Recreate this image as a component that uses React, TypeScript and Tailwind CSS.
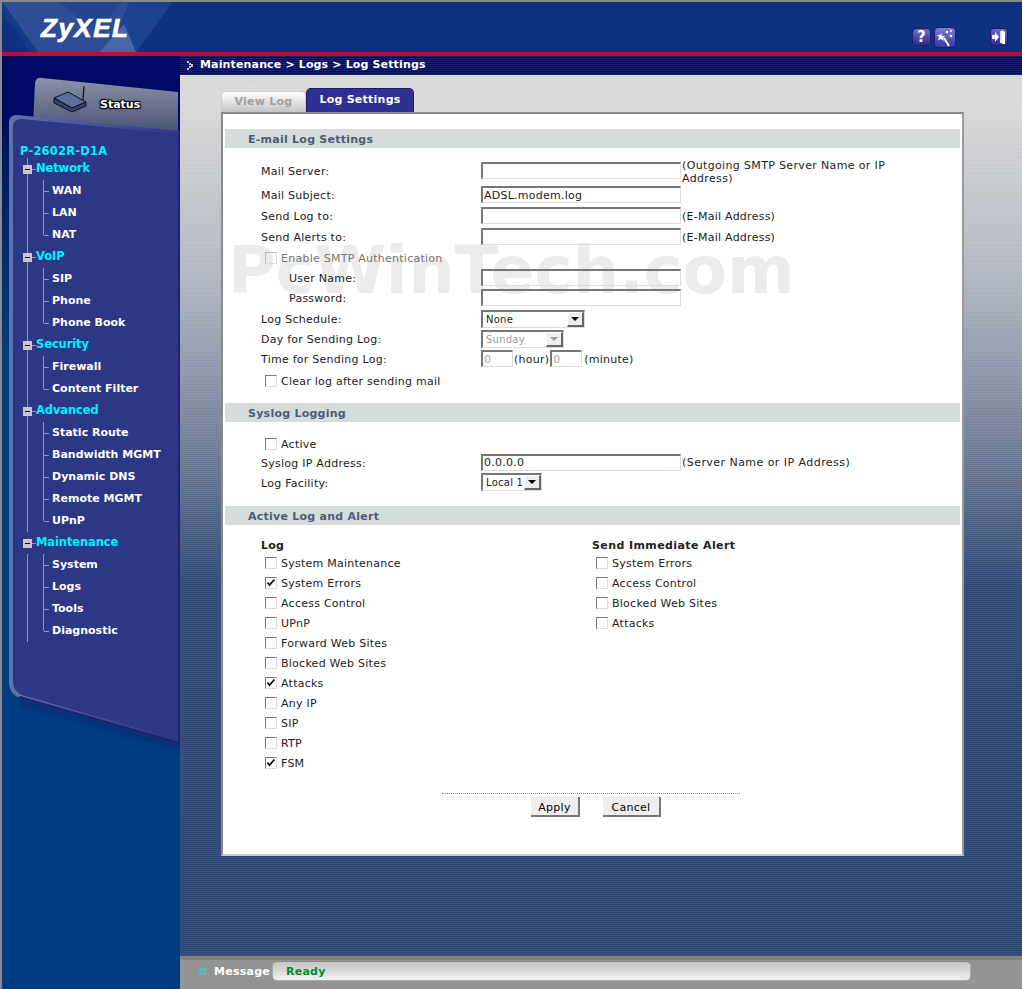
import type { ReactNode } from 'react';

const menu = [
    { title: 'Network', items: ['WAN', 'LAN', 'NAT'] },
    { title: 'VoIP', items: ['SIP', 'Phone', 'Phone Book'] },
    { title: 'Security', items: ['Firewall', 'Content Filter'] },
    { title: 'Advanced', items: ['Static Route', 'Bandwidth MGMT', 'Dynamic DNS', 'Remote MGMT', 'UPnP'] },
    { title: 'Maintenance', items: ['System', 'Logs', 'Tools', 'Diagnostic'] },
];

const logItems: [string, boolean][] = [
    ['System Maintenance', false],
    ['System Errors', true],
    ['Access Control', false],
    ['UPnP', false],
    ['Forward Web Sites', false],
    ['Blocked Web Sites', false],
    ['Attacks', true],
    ['Any IP', false],
    ['SIP', false],
    ['RTP', false],
    ['FSM', true],
];

const alertItems = ['System Errors', 'Access Control', 'Blocked Web Sites', 'Attacks'];

function Check({ label, checked = false, disabled = false }: { label: string; checked?: boolean; disabled?: boolean }) {
    return (
        <div className={`flex h-[20px] items-center ${disabled ? 'text-[#777]' : 'text-[#222]'}`}>
            <span className={`mb-[3px] ml-[4px] flex h-[12px] w-[12px] items-center justify-center border border-r-[#ddd] border-b-[#ddd] ${disabled ? 'border-t-[#bbb] border-l-[#bbb]' : 'border-t-[#777] border-l-[#777]'}`}>
                {checked && (
                    <svg viewBox="0 0 10 10" className="h-[10px] w-[10px]">
                        <path d="M1.5 4.5l2 2.5L8.5 1.5" fill="none" stroke="#111" strokeWidth="1.8" />
                    </svg>
                )}
            </span>
            <span className="ml-[4px] pt-[1px]">{label}</span>
        </div>
    );
}

function TextBox({ value = '', w = 'w-[200px]', disabled = false }: { value?: string; w?: string; disabled?: boolean }) {
    return (
        <div className={`flex h-[17px] ${w} shrink-0 items-center border border-t-2 border-l-2 border-t-[#777] border-l-[#777] border-r-[#ddd] border-b-[#ddd] pl-[1px] text-[11px] leading-none ${disabled ? 'text-[#aaa]' : 'text-[#222]'}`}>
            {value}
        </div>
    );
}

function SelectBox({ value, w, disabled = false }: { value: string; w: string; disabled?: boolean }) {
    return (
        <div className={`flex h-[18px] ${w} items-center justify-between border border-t-2 border-l-2 border-t-[#777] border-l-[#777] border-r-[#ddd] border-b-[#ddd] bg-white pl-[3px] text-[10px] ${disabled ? 'text-[#999]' : 'text-[#222]'}`}>
            <span>{value}</span>
            <span className="flex h-[15px] w-[17px] items-center justify-center border border-r-2 border-b-2 border-t-white border-l-white border-r-[#666] border-b-[#666] bg-[#eee]">
                <span className={`h-0 w-0 border-x-[4px] border-t-[4px] border-x-transparent ${disabled ? 'border-t-[#999]' : 'border-t-black'}`} />
            </span>
        </div>
    );
}

function Section({ title }: { title: string }) {
    return (
        <div className="ml-[2px] flex h-[19px] w-[735px] items-center bg-[#d5dddc] pl-[23px] pt-[4px] text-[11px] font-bold text-[#505a78]">
            {title}
        </div>
    );
}

function Row({ label, indent = 'pl-[38px]', h = 'h-[21px]', children }: { label: string; indent?: string; h?: string; children?: ReactNode }) {
    return (
        <div className={`flex ${h} items-center`}>
            <span className={`w-[258px] shrink-0 pt-[4px] text-[#222] ${indent}`}>{label}</span>
            {children}
        </div>
    );
}

export default function App() {
    return (
        <div className="flex h-[989px] w-[1022px] flex-col overflow-hidden border-l-2 border-t-2 border-[#8a8a8a] font-['DejaVu_Sans',sans-serif] text-[11px] tracking-[0.25px]">
            {/* top banner */}
            <header className="relative flex h-[50px] shrink-0 items-center justify-end overflow-hidden bg-[#0f3180] pt-[20px]">
                <svg className="absolute left-0 top-0 h-[50px] w-[180px]" viewBox="0 0 180 50">
                    <path d="M0 0H170L134 50H36Z" fill="#2f4d95" />
                    <path d="M0 0V10L28 50H36Z" fill="#143a85" />
                    <path d="M127 0H170L134 50H108Z" fill="#1a4290" />
                    <path d="M98 50L122 22L134 50Z" fill="#4a66a6" />
                    <path d="M58 0H120L94 30Z" fill="#254490" />
                </svg>
                <span className="absolute left-[39px] top-[13px] font-['Liberation_Sans',sans-serif] text-[26px] font-bold italic leading-none tracking-[1.5px] text-white [-webkit-text-stroke:0.7px_white]">ZyXEL</span>
                <div className="relative mr-[14px] flex items-center">
                    <span className="flex h-[18px] w-[19px] items-center justify-center rounded-[4px] border border-[#1d1a6e] bg-gradient-to-b from-[#6d6cc6] to-[#2c2a92] text-[15px] font-bold leading-none text-white">?</span>
                    <span className="ml-[3px] flex h-[21px] w-[22px] items-center justify-center rounded-[4px] border border-[#1d1a6e] bg-gradient-to-b from-[#7d7cd0] to-[#3a38a0]">
                        <svg viewBox="0 0 20 19" className="h-[19px] w-[20px]">
                            <path d="M9 10l5 8" stroke="#fff" strokeWidth="2" />
                            <path d="M6 5l1 3 3 0-2 2 1 3-3-2-3 1 1-3-2-2 3 0z" fill="#fff" />
                            <circle cx="12" cy="4" r="1.3" fill="#fff" />
                            <circle cx="16" cy="8" r="1.3" fill="#fff" />
                            <circle cx="16" cy="3" r="1" fill="#fff" />
                        </svg>
                    </span>
                    <span className="ml-[34px] flex h-[18px] w-[18px] items-center justify-center rounded-[4px] border border-[#1d1a6e] bg-gradient-to-b from-[#6d6cc6] to-[#2c2a92]">
                        <svg viewBox="0 0 16 16" className="h-[16px] w-[16px]">
                            <path d="M1 6h3V3l4 5-4 5v-3H1z" fill="#fff" />
                            <path d="M9 2h2v12H9z" fill="#dfe0ff" />
                            <path d="M11 1l3 2v12h-3z" fill="#fff" />
                        </svg>
                    </span>
                </div>
            </header>
            <div className="h-[4px] shrink-0 bg-[#b0172e]" />

            <div className="flex min-h-0 flex-1">
                {/* left navigation */}
                <aside className="relative w-[178px] shrink-0 bg-gradient-to-b from-[#000a64] from-[6%] to-[#003c80] to-[32%] tracking-normal">
                    <svg className="absolute left-0 top-0 h-[720px] w-[178px]" viewBox="0 0 178 720">
                        <defs>
                            <linearGradient id="tab" x1="0" y1="0" x2="0" y2="1">
                                <stop offset="0" stopColor="#8c92a8" />
                                <stop offset="1" stopColor="#4b5273" />
                            </linearGradient>
                            <linearGradient id="edge" x1="0" y1="0" x2="1" y2="0">
                                <stop offset="0" stopColor="#5f72ad" />
                                <stop offset="1" stopColor="#2d3785" />
                            </linearGradient>
                        </defs>
                        <path d="M31 70L33 27Q34 21 40 22L176 36V76Z" fill="url(#tab)" />
                        {/* soft shadow under the panel */}
                        <path d="M18 645L178 691" stroke="#0a2a70" strokeOpacity="0.6" strokeWidth="2" />
                        <path d="M18 647L178 693" stroke="#0a2a70" strokeOpacity="0.4" strokeWidth="2" />
                        <path d="M18 649L178 695" stroke="#0a2a70" strokeOpacity="0.25" strokeWidth="2" />
                        <path d="M18 651L178 697" stroke="#0a2a70" strokeOpacity="0.12" strokeWidth="2" />
                        <path d="M7 627V66Q7 59 15 59L178 75V688L18 642Q7 638 7 627Z" fill="url(#edge)" />
                        <path d="M11 625V70Q11 63 20 63L176 78V684L20 639Q11 635 11 625Z" fill="#2c3785" />
                        <path d="M176 76H178V688L176 687Z" fill="#20226f" />
                        <path d="M18 640L178 686V689L16 642Z" fill="#20226f" />
                        <line x1="82" y1="30" x2="81" y2="44" stroke="#111" strokeWidth="1.2" />
                        <path d="M52 42L66 36L84 46L70 52Z" fill="#5a7099" stroke="#111" />
                        <path d="M52 42V47L70 56L84 50V46L70 52Z" fill="#2f4470" stroke="#111" />
                    </svg>
                    <span className="absolute left-[98px] top-[41px] text-[11px] font-bold text-white [text-shadow:1px_1px_1px_#000,-1px_-1px_1px_#000,1px_-1px_1px_#000,-1px_1px_1px_#000]">Status</span>

                    <nav className="relative pl-[18px] pt-[89px] font-bold text-white">
                        <div className="h-[13px] text-[11.5px] leading-[13px] tracking-[0.2px] text-[#00f0ff]">P-2602R-D1A</div>
                        {menu.map((group, g) => (
                            <div key={group.title} className={`ml-[7px] border-l ${g === menu.length - 1 ? 'border-transparent' : 'border-[#8f96b8]'}`}>
                                <div className="-ml-[5px] flex h-[22px] items-center">
                                    <span className="flex h-[9px] w-[9px] shrink-0 items-center justify-center bg-[#c8c8c8]">
                                        <span className="h-[1px] w-[5px] bg-black" />
                                    </span>
                                    <span className="h-[1px] w-[4px] bg-[#8f96b8]" />
                                    <span className="text-[11.5px] tracking-[-0.1px] text-[#00f0ff]">{group.title}</span>
                                </div>
                                <div className={g === menu.length - 1 ? '-ml-[1px] border-l border-[#8f96b8]' : ''}>
                                    {group.items.map((item, i) => (
                                        <div key={item} className="flex h-[22px] items-center">
                                            <span className={`ml-[15px] w-[1px] self-start bg-[#8f96b8] ${i === group.items.length - 1 ? 'h-[11px]' : 'h-[22px]'}`} />
                                            <span className="mr-[3px] h-[1px] w-[5px] bg-[#8f96b8]" />
                                            <span>{item}</span>
                                        </div>
                                    ))}
                                </div>
                            </div>
                        ))}
                    </nav>
                </aside>

                {/* main column */}
                <div className="flex min-w-0 flex-1 flex-col">
                    <div className="flex h-[19px] shrink-0 items-center bg-[repeating-linear-gradient(to_bottom,#1a2370_0,#1a2370_1px,#05095a_1px,#05095a_2px)] pl-[7px] text-[11px] font-bold tracking-[0.15px] text-white">
                        <svg viewBox="0 0 6 9" className="mr-[7px] h-[9px] w-[6px]">
                            <path d="M0 0h2v2H0zM2 2h2v2H2zM4 3h2v3H4zM2 5h2v2H2zM0 7h2v2H0z" fill="#c4c4c4" />
                        </svg>
                        Maintenance &gt; Logs &gt; Log Settings
                    </div>
                    <main className="min-h-0 flex-1 bg-[repeating-linear-gradient(to_bottom,rgba(255,255,255,0.06)_0,rgba(255,255,255,0.06)_1px,rgba(0,0,0,0.03)_1px,rgba(0,0,0,0.03)_2px),linear-gradient(to_bottom,#dcdcdc_3%,#b4bac4_23%,#6f7d98_43%,#2f4a78_58%,#2f4876_100%)] pl-[41px] pt-[13px]">
                        {/* tabs */}
                        <div className="flex h-[24px] items-end text-[11px] font-bold">
                            <div className="flex h-[21px] w-[85px] items-center justify-center rounded-t-[5px] border border-b-0 border-[#ccc] bg-gradient-to-b from-white to-[#c4c4c4] text-[#a0a0a0]">View Log</div>
                            <div className="flex h-[24px] w-[108px] items-center justify-center rounded-t-[5px] border border-b-0 border-[#1d1a6e] bg-[#2e3192] text-white">Log Settings</div>
                        </div>
                        {/* form panel */}
                        <div className="relative h-[744px] w-[743px] border-2 border-[#8a8a8a] border-r-[#999] border-b-[#ccc] bg-white pt-[15px]">
                            <div className="pointer-events-none absolute left-[5px] top-[124px] text-[65px] font-bold leading-none tracking-normal text-[#ececec]">PcWinTech.com</div>
                            <div className="relative">
                                <Section title="E-mail Log Settings" />
                                <div className="mt-[14px]">
                                    <div className="flex h-[22px] items-start">
                                        <span className="w-[258px] shrink-0 pl-[38px] pt-[2px] text-[#222]">Mail Server:</span>
                                        <TextBox />
                                        <span className="ml-[1px] -mt-[3px] w-[215px] leading-[13px] tracking-[0.35px] text-[#222]">(Outgoing SMTP Server Name or IP Address)</span>
                                    </div>
                                    <Row label="Mail Subject:"><TextBox value="ADSL.modem.log" /></Row>
                                    <Row label="Send Log to:"><TextBox /><span className="ml-[1px] pt-[3px] text-[#222]">(E-Mail Address)</span></Row>
                                    <Row label="Send Alerts to:"><TextBox /><span className="ml-[1px] pt-[3px] text-[#222]">(E-Mail Address)</span></Row>
                                    <div className="ml-[38px] h-[21px] pt-[2px]"><Check label="Enable SMTP Authentication" disabled /></div>
                                    <Row label="User Name:" indent="pl-[66px]" h="h-[19px]"><TextBox /></Row>
                                    <Row label="Password:" indent="pl-[66px]"><TextBox /></Row>
                                    <Row label="Log Schedule:"><SelectBox value="None" w="w-[104px]" /></Row>
                                    <Row label="Day for Sending Log:" h="h-[19px]"><SelectBox value="Sunday" w="w-[83px]" disabled /></Row>
                                    <Row label="Time for Sending Log:">
                                        <TextBox value="0" w="w-[32px]" disabled />
                                        <span className="mx-[1px] pt-[4px] text-[#222]">(hour)</span>
                                        <TextBox value="0" w="w-[32px]" disabled />
                                        <span className="ml-[2px] pt-[4px] text-[#222]">(minute)</span>
                                    </Row>
                                    <div className="ml-[38px] mt-[3px]"><Check label="Clear log after sending mail" /></div>
                                </div>

                                <div className="mt-[11px]"><Section title="Syslog Logging" /></div>
                                <div className="mt-[13px]">
                                    <div className="ml-[38px] h-[18px]"><Check label="Active" /></div>
                                    <Row label="Syslog IP Address:" h="h-[18px]"><TextBox value="0.0.0.0" /><span className="ml-[1px] pt-[3px] tracking-[0.45px] text-[#222]">(Server Name or IP Address)</span></Row>
                                    <Row label="Log Facility:" h="h-[22px]"><SelectBox value="Local 1" w="w-[61px]" /></Row>
                                </div>

                                <div className="mt-[13px]"><Section title="Active Log and Alert" /></div>
                                <div className="mt-[12px] flex">
                                    <div className="ml-[38px] w-[331px]">
                                        <div className="h-[17px] pt-[1px] font-bold text-[#222]">Log</div>
                                        {logItems.map(([label, checked]) => (
                                            <Check key={label} label={label} checked={checked} />
                                        ))}
                                    </div>
                                    <div>
                                        <div className="h-[17px] pt-[1px] font-bold tracking-[0.4px] text-[#222]">Send Immediate Alert</div>
                                        {alertItems.map((label) => (
                                            <Check key={label} label={label} />
                                        ))}
                                    </div>
                                </div>

                                <div className="ml-[219px] mt-[19px] w-[298px] border-t border-dotted border-[#888]" />
                                <div className="mt-[3px] flex pl-[308px]">
                                    <button className="h-[20px] w-[49px] border-r-2 border-b-2 border-[#777] bg-[#eee] pt-[3px] text-[11px] leading-none text-black">Apply</button>
                                    <button className="ml-[23px] h-[20px] w-[58px] border-r-2 border-b-2 border-[#777] bg-[#eee] pt-[3px] text-[11px] leading-none text-black">Cancel</button>
                                </div>
                            </div>
                        </div>
                    </main>
                    {/* status bar */}
                    <footer className="flex h-[33px] shrink-0 items-center border-t-[4px] border-[#808080] bg-[#949494] pb-[7px]">
                        <span className="ml-[19px] grid grid-cols-[3px_3px] gap-[1px]">
                            <i className="h-[3px] w-[3px] bg-[#33cccc]" /><i className="h-[3px] w-[3px] bg-[#33cccc]" />
                            <i className="h-[3px] w-[3px] bg-[#33cccc]" /><i className="h-[3px] w-[3px] bg-[#33cccc]" />
                        </span>
                        <span className="ml-[8px] w-[58px] shrink-0 pt-[3px] font-bold text-white">Message</span>
                        <div className="flex h-[20px] w-[699px] items-center rounded-[5px] border border-[#aaa] border-t-[#888] bg-gradient-to-b from-[#c4c4c4] to-[#f0f0f0] pl-[13px] pt-[3px] font-bold text-[#008a30]">Ready</div>
                    </footer>
                </div>
            </div>
        </div>
    );
}
